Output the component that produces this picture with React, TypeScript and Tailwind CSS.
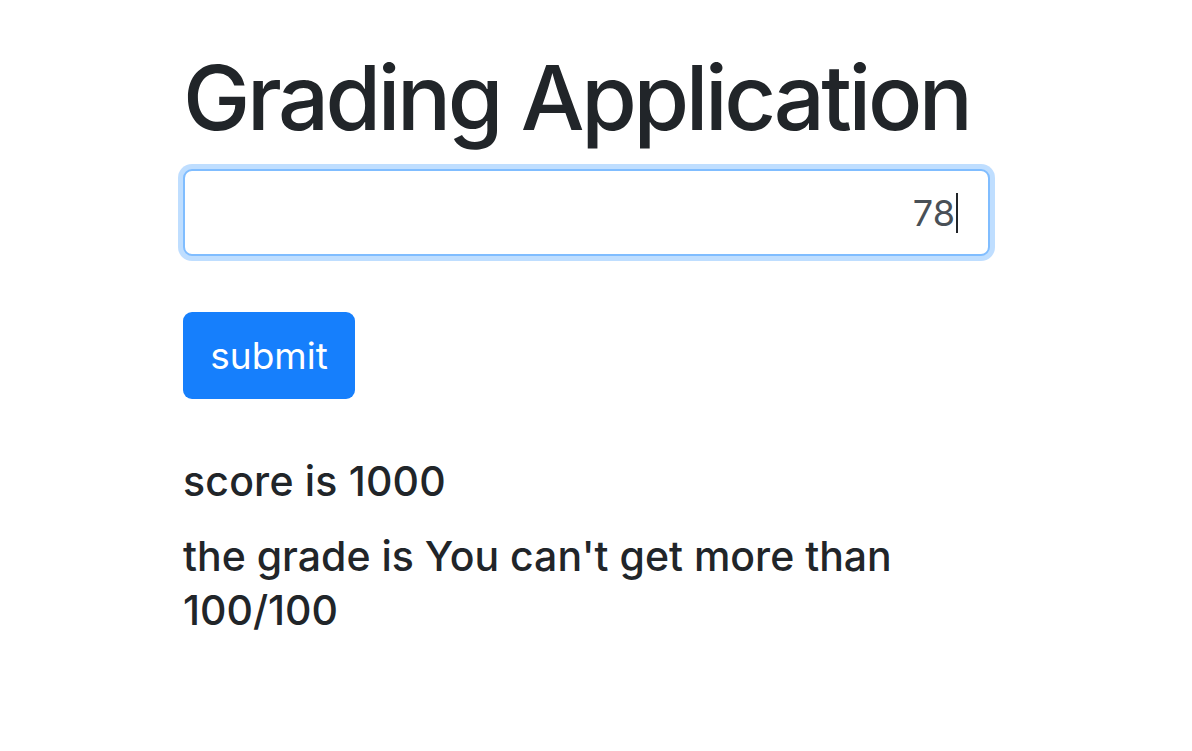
import React from "react";

export default function App() {
  return (
    <div className="min-h-[751px] w-[1192px] bg-white" style={{ fontFamily: "Inter, 'Liberation Sans', sans-serif" }}>
      <div className="flex flex-col items-start pl-[183px] pt-[44px] text-[#212529]">
        <h1 className="text-[90px] leading-[1.2] font-medium tracking-[-3.4px] m-0">Grading Application</h1>
        <div className="mt-[17px] w-[807px] h-[87px] rounded-[9px] border-[2px] border-[#80bdff] shadow-[0_0_0_5px_rgba(0,123,255,0.25)] bg-white flex items-center justify-end pr-[30px]">
          <span className="text-[36px] text-[#495057] leading-none">78</span>
          <span className="w-[2px] h-[40px] bg-[#212529] ml-[1px]"></span>
        </div>
        <button className="mt-[56px] w-[172px] h-[87px] rounded-[9px] bg-[#167ffc] text-white text-[37px] leading-none">submit</button>
        <div className="mt-[56px] text-[41px] leading-[1.3] font-medium tracking-[0.2px]">score is 1000</div>
        <div className="mt-[22px] w-[740px] text-[41px] leading-[1.3] font-medium">the grade is You can't get more than 100/100</div>
      </div>
    </div>
  );
}
